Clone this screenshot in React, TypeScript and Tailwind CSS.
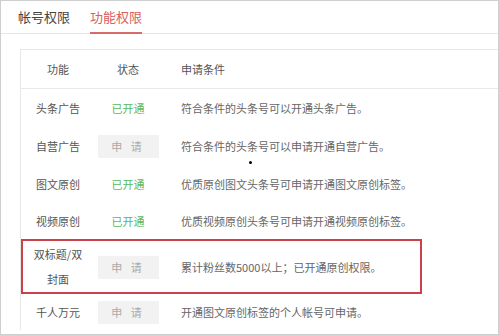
const rows: { name: React.ReactNode; open: boolean; desc: string; h: string }[] = [
  { name: "头条广告", open: true, desc: "符合条件的头条号可以开通头条广告。", h: "h-[39px]" },
  { name: "自营广告", open: false, desc: "符合条件的头条号可以申请开通自营广告。", h: "h-[37px]" },
  { name: "图文原创", open: true, desc: "优质原创图文头条号可申请开通图文原创标签。", h: "h-[38px]" },
  { name: "视频原创", open: true, desc: "优质视频原创头条号可申请开通视频原创标签。", h: "h-[37px]" },
  {
    name: (
      <>
        双标题/双
        <br />
        封面
      </>
    ),
    open: false,
    desc: "累计粉丝数5000以上；已开通原创权限。",
    h: "h-[54px]",
  },
  { name: "千人万元", open: false, desc: "开通图文原创标签的个人帐号可申请。", h: "h-[36px]" },
];

export default function App() {
  return (
    <div
      className="relative w-[499px] h-[335px] overflow-hidden bg-white border border-[#cfcfcf]"
      style={{ fontFamily: '"Noto Sans CJK SC", "Noto Sans", sans-serif' }}
    >
      {/* tabs */}
      <div className="flex h-[33px] items-stretch gap-[20px] pl-[17px] border-b border-[#e6e6e6]">
        <div className="flex items-center text-[13px] text-[#444]">帐号权限</div>
        <div className="flex items-center text-[13px] text-[#d9605f] border-b-2 border-[#d86a68] -mb-px pt-[1px]">
          功能权限
        </div>
      </div>

      {/* table */}
      <div className="ml-[19px] mt-[15px] border-l border-t border-[#e8e8e8] text-[11px] text-[#555]">
        <div className="flex h-[39px] items-center border-b border-[#e8e8e8]">
          <div className="w-[74px] text-center">功能</div>
          <div className="w-[66px] text-center">状态</div>
          <div className="pl-[20px]">申请条件</div>
        </div>
        {rows.map((r, i) => (
          <div key={i} className={`flex items-center ${r.h}`}>
            <div className="w-[74px] text-center leading-[25px]">{r.name}</div>
            <div className="w-[66px] flex justify-center">
              {r.open ? (
                <span className="text-[#5cb85c]">已开通</span>
              ) : (
                <span className="flex w-[61px] h-[23px] items-center justify-center bg-[#f2f2f2] text-[#aaa] tracking-[3px]">
                  申 请
                </span>
              )}
            </div>
            <div className="pl-[20px] text-[#666]">{r.desc}</div>
          </div>
        ))}
      </div>

      {/* red annotation box */}
      <div className="absolute left-[20px] top-[238px] w-[401px] h-[55px] border-2 border-[#c9414b]" />
      {/* stray dot */}
      <div className="absolute left-[248px] top-[160px] w-[3px] h-[3px] rounded-full bg-black" />
    </div>
  );
}
